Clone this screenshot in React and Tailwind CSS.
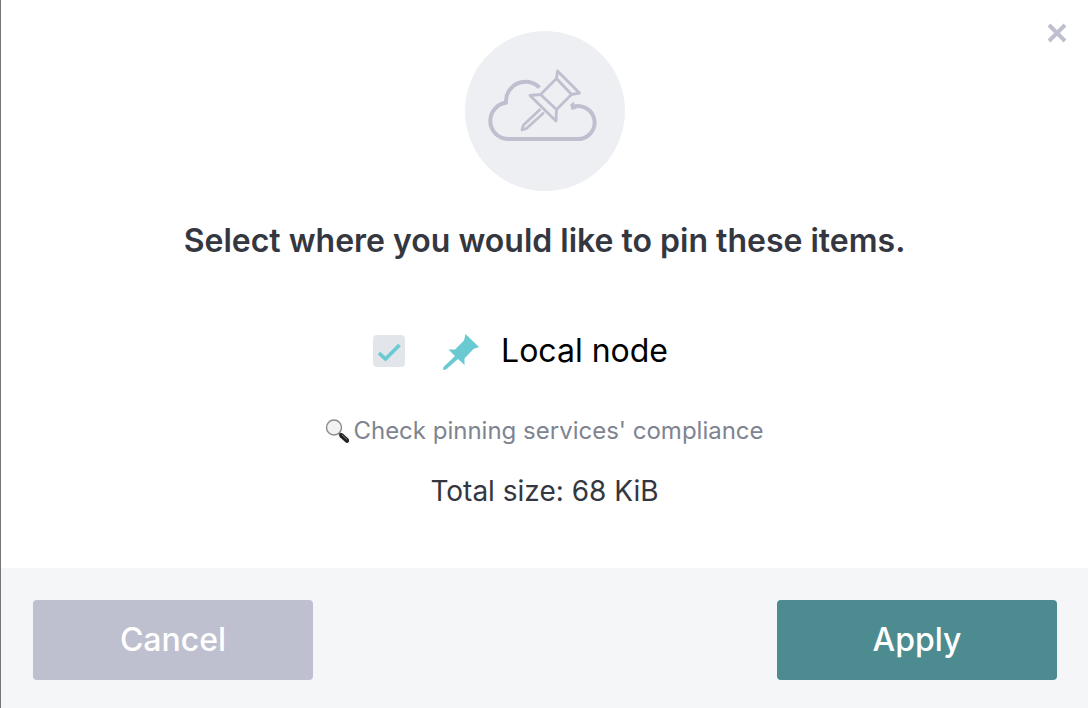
import React, { useState } from 'react'

const CloudPinIcon = () => (
  <svg className="w-[120px] h-[90px]" viewBox="5 0 120 90" fill="none" stroke="#bfc0cf" strokeLinejoin="round" aria-hidden="true">
    <path strokeWidth="4" d="M59.5 27.7A19.5 19.5 0 0 0 26 42.8A18.2 18.2 0 0 0 27.5 79H97A16.5 16.5 0 1 0 92 47.2" />
    <path fill="#bfc0cf" stroke="none" d="M90.3 44.5L94 41.5L94.5 46L97 48.5L91.5 50Z" />
    <path strokeWidth="2.8" d="M77.5 11L99.5 33L91.5 34.5L76.5 49.5L76 61L50 35.5L60.5 34.5L76.5 18.5Z" />
    <path strokeWidth="2.8" d="M76.5 18.5L91.5 34.5M60.5 34.5L76.5 49.5M60.5 49L43.5 65L42 70L46.5 68.5L64 52.5" />
  </svg>
)

const PinIcon = () => (
  <svg className="w-10 h-10" viewBox="0 0 40 40" fill="#6acad1" aria-hidden="true">
    <path d="M24.5 3L38 16L32.5 18L23.5 27.5V34L17 28L5 38.5L2 39L2.5 36L14 25L7.5 18.5H14L23 9.5Z" />
  </svg>
)

const MagnifierIcon = () => (
  <svg className="w-6 h-6" viewBox="0 0 24 24" fill="none" aria-hidden="true">
    <path d="M13.5 13.5L17 17" stroke="#555" strokeWidth="2.5" />
    <path d="M16.5 16.5L22 21.5" stroke="#222" strokeWidth="4.5" strokeLinecap="round" />
    <path d="M17 16L22 20.5" stroke="#777" strokeWidth="1" strokeLinecap="round" />
    <circle cx="9" cy="8.5" r="7.5" fill="#f1f3f3" stroke="#8b8b8b" strokeWidth="1.4" />
  </svg>
)

const App = () => {
  const [local, setLocal] = useState(true)

  return (
    <div role="dialog" aria-labelledby="pin-title" className="relative min-h-screen flex flex-col bg-white border-l border-[#77757c] font-['Inter',sans-serif]">
      <button aria-label="Close" className="absolute top-[23px] right-[21px]">
        <svg className="w-5 h-5" viewBox="0 0 20 20" stroke="#bfc0cf" strokeWidth="4" aria-hidden="true">
          <path d="M2 2L18 18M18 2L2 18" />
        </svg>
      </button>

      <main className="flex-1 flex flex-col items-center pt-[31px] pb-12">
        <div className="w-40 h-40 rounded-full bg-[#edeff3] flex justify-center pt-[29px]">
          <CloudPinIcon />
        </div>
        <h1 id="pin-title" className="mt-7 text-[32px] leading-11 font-semibold text-[#34373f] text-center">
          Select where you would like to pin these items.
        </h1>
        <label className="mt-17 mr-12 flex items-center text-[32px] leading-10 text-black">
          <span className="relative flex w-8 h-8">
            <input
              type="checkbox"
              checked={local}
              onChange={({ target }) => setLocal(target.checked)}
              className="peer appearance-none w-8 h-8 rounded-sm bg-[#e2e5e9]"
            />
            <svg className="absolute inset-0 w-8 h-8 pointer-events-none opacity-0 peer-checked:opacity-100" viewBox="0 0 32 32" fill="none" stroke="#6acad1" strokeWidth="3.6" aria-hidden="true">
              <path d="M6 18L12.5 24L26.5 10" />
            </svg>
          </span>
          <span className="ml-9 mr-5"><PinIcon /></span>
          Local node
        </label>
        <a href="#compliance" className="mt-11 flex items-center gap-1 text-2xl leading-8 text-[#7f8491]">
          <MagnifierIcon />
          Check pinning services' compliance
        </a>
        <p className="mt-6 text-[28px] leading-10 text-[#34373f]">Total size: 68 KiB</p>
      </main>

      <footer className="flex justify-between bg-[#f4f6f8] pl-8 pr-[31px] pt-8 pb-7">
        <button className="w-[280px] h-20 rounded-sm bg-[#bfc0cf] text-white text-[32px] font-medium">Cancel</button>
        <button className="w-[280px] h-20 rounded-sm bg-[#4c8c90] text-white text-[32px] font-medium">Apply</button>
      </footer>
    </div>
  )
}

export default App
